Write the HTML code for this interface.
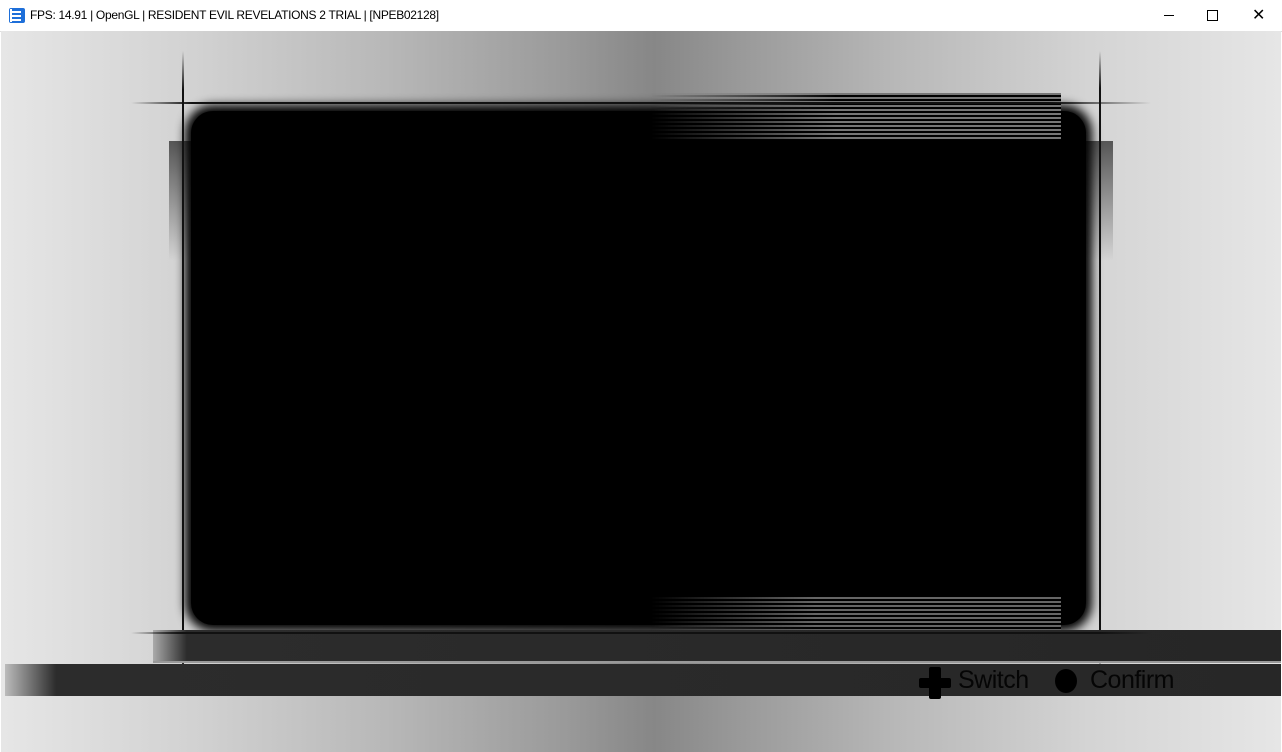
<!DOCTYPE html><html><head><style>
*{margin:0;padding:0}
body{width:1282px;height:752px;overflow:hidden;position:relative;background:#fff;font-family:"Liberation Sans",sans-serif}
.tb{position:absolute;left:0;top:0;width:1282px;height:31px;background:#fff;border-bottom:1px solid #ddd}
.tb span{position:absolute;left:30px;top:8px;font-size:12px;color:#000;letter-spacing:-0.3px}
.game{position:absolute;left:1px;top:31px;width:1280px;height:721px;background:linear-gradient(90deg,#e6e6e6 0%,#d2d2d2 15%,#b8b8b8 30%,#9a9a9a 44%,#878787 51%,#9a9a9a 58%,#b8b8b8 70%,#d4d4d4 85%,#e6e6e6 100%);overflow:hidden}
.a{position:absolute}
</style></head><body>
<div class="tb">
<svg class="a" style="left:9px;top:8px" width="16" height="15"><rect x="0" y="0" width="16" height="15" rx="2" fill="#1e6fd9"/><rect x="3" y="3" width="9" height="2" fill="#fff"/><rect x="3" y="7" width="9" height="2" fill="#fff"/><rect x="3" y="11" width="9" height="2" fill="#fff"/><rect x="1" y="1" width="2" height="13" fill="#fff"/></svg>
<span>FPS: 14.91 | OpenGL | RESIDENT EVIL REVELATIONS 2 TRIAL | [NPEB02128]</span>
<div class="a" style="left:1164px;top:15px;width:10px;height:1px;background:#000"></div>
<div class="a" style="left:1207px;top:10px;width:9px;height:9px;border:1px solid #000"></div>
<div class="a" style="left:1252px;top:5px;font-size:16px;color:#000">✕</div>
</div>
<div class="game">
<div class="a" style="left:168px;top:110px;width:944px;height:120px;background:linear-gradient(180deg,#555,rgba(80,80,80,0))"></div>
<div class="a" style="left:190px;top:80px;width:895px;height:514px;background:#000;border-radius:22px;box-shadow:0 0 10px 6px #000"></div>
<div class="a" style="left:650px;top:62px;width:410px;height:48px;background:repeating-linear-gradient(180deg,#777 0 2px,#000 2px 4px);-webkit-mask:linear-gradient(90deg,transparent,#000 45%)"></div>
<div class="a" style="left:650px;top:566px;width:410px;height:34px;background:repeating-linear-gradient(180deg,#666 0 2px,#000 2px 4px);-webkit-mask:linear-gradient(90deg,transparent,#000 40%)"></div>
<div class="a" style="left:130px;top:71px;width:1020px;height:2px;background:linear-gradient(90deg,transparent,#111 6%,#111 90%,transparent)"></div>
<div class="a" style="left:181px;top:20px;width:2px;height:640px;background:linear-gradient(180deg,transparent,#111 6%,#111 95%,transparent)"></div>
<div class="a" style="left:1098px;top:20px;width:2px;height:620px;background:linear-gradient(180deg,transparent,#111 6%,#111 95%,transparent)"></div>
<div class="a" style="left:152px;top:599px;width:1128px;height:32px;background:linear-gradient(90deg,#aaa,#2c2c2c 3%,#262626)"></div>
<div class="a" style="left:130px;top:601px;width:1020px;height:2px;background:linear-gradient(90deg,transparent,#111 5%,#111 95%,transparent)"></div>
<div class="a" style="left:152px;top:630px;width:1128px;height:2px;background:#999"></div>
<div class="a" style="left:4px;top:633px;width:1276px;height:32px;background:linear-gradient(90deg,#bbb,#2c2c2c 4%,#272727)"></div>
<div class="a" style="left:918px;top:647px;width:32px;height:10px;background:#000;border-radius:2px"></div>
<div class="a" style="left:928px;top:636px;width:12px;height:32px;background:#000;border-radius:2px"></div>
<div class="a" style="left:957px;top:635px;font-size:25px;color:#050505;letter-spacing:-0.5px">Switch</div>
<div class="a" style="left:1054px;top:638px;width:22px;height:24px;border-radius:50%;background:#000"></div>
<div class="a" style="left:1089px;top:635px;font-size:25px;color:#050505;letter-spacing:-0.5px">Confirm</div>
</div>
</body></html>
